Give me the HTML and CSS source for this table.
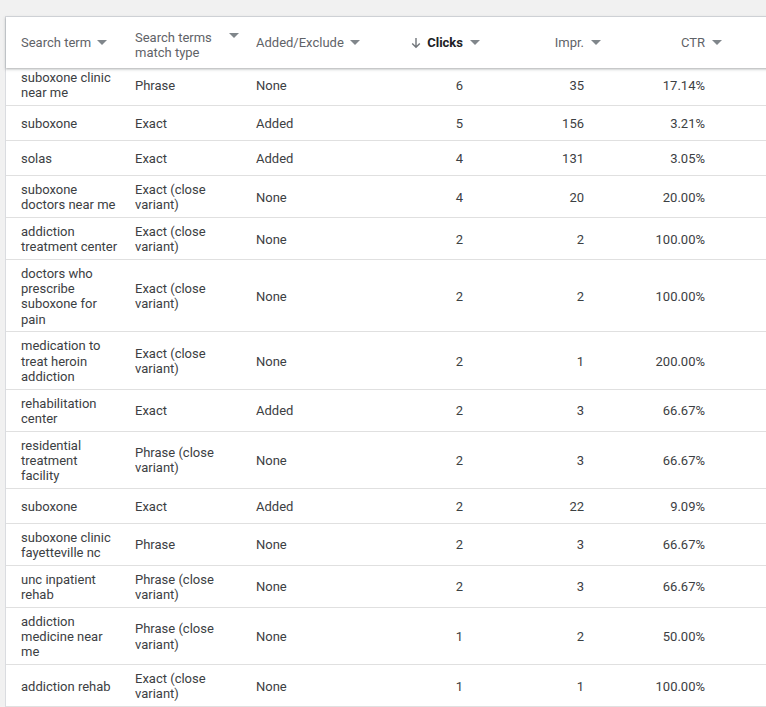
FILE: index.html
```html
<!DOCTYPE html>
<html lang="en">
<head>
<meta charset="utf-8">
<title>Search terms</title>
<link rel="stylesheet" href="styles.css">
</head>
<body>
<div class="page">
  <div class="card">
    <div class="thead">
      <div class="row head">
        <div class="th"><span class="label">Search term</span><span class="dd"></span></div>
        <div class="th top"><span class="label wrap">Search terms match type</span><span class="dd"></span></div>
        <div class="th"><span class="label clip">Added/Excluded</span><span class="dd"></span></div>
        <div class="th num sorted"><span class="arrow">
          <svg width="10" height="12" viewBox="0 0 10 12"><path d="M5 1v9M1.2 6.4L5 10.2l3.8-3.8" fill="none" stroke="#70757a" stroke-width="1.4"/></svg></span><span class="label">Clicks</span><span class="dd"></span></div>
        <div class="th num"><span class="label">Impr.</span><span class="dd"></span></div>
        <div class="th num"><span class="label">CTR</span><span class="dd"></span></div>
        <div class="th"></div>
      </div>
    </div>
    <div class="tbody">
      <div class="row"><div class="td">suboxone clinic near me</div><div class="td">Phrase</div><div class="td">None</div><div class="td num">6</div><div class="td num">35</div><div class="td num">17.14%</div><div class="td"></div></div>
      <div class="row"><div class="td">suboxone</div><div class="td">Exact</div><div class="td">Added</div><div class="td num">5</div><div class="td num">156</div><div class="td num">3.21%</div><div class="td"></div></div>
      <div class="row"><div class="td">solas</div><div class="td">Exact</div><div class="td">Added</div><div class="td num">4</div><div class="td num">131</div><div class="td num">3.05%</div><div class="td"></div></div>
      <div class="row"><div class="td">suboxone doctors near me</div><div class="td">Exact (close variant)</div><div class="td">None</div><div class="td num">4</div><div class="td num">20</div><div class="td num">20.00%</div><div class="td"></div></div>
      <div class="row"><div class="td">addiction treatment center</div><div class="td">Exact (close variant)</div><div class="td">None</div><div class="td num">2</div><div class="td num">2</div><div class="td num">100.00%</div><div class="td"></div></div>
      <div class="row"><div class="td">doctors who prescribe suboxone for pain</div><div class="td">Exact (close variant)</div><div class="td">None</div><div class="td num">2</div><div class="td num">2</div><div class="td num">100.00%</div><div class="td"></div></div>
      <div class="row"><div class="td">medication to treat heroin addiction</div><div class="td">Exact (close variant)</div><div class="td">None</div><div class="td num">2</div><div class="td num">1</div><div class="td num">200.00%</div><div class="td"></div></div>
      <div class="row"><div class="td">rehabilitation center</div><div class="td">Exact</div><div class="td">Added</div><div class="td num">2</div><div class="td num">3</div><div class="td num">66.67%</div><div class="td"></div></div>
      <div class="row"><div class="td">residential treatment facility</div><div class="td">Phrase (close variant)</div><div class="td">None</div><div class="td num">2</div><div class="td num">3</div><div class="td num">66.67%</div><div class="td"></div></div>
      <div class="row"><div class="td">suboxone</div><div class="td">Exact</div><div class="td">Added</div><div class="td num">2</div><div class="td num">22</div><div class="td num">9.09%</div><div class="td"></div></div>
      <div class="row"><div class="td">suboxone clinic fayetteville nc</div><div class="td">Phrase</div><div class="td">None</div><div class="td num">2</div><div class="td num">3</div><div class="td num">66.67%</div><div class="td"></div></div>
      <div class="row"><div class="td">unc inpatient rehab</div><div class="td">Phrase (close variant)</div><div class="td">None</div><div class="td num">2</div><div class="td num">3</div><div class="td num">66.67%</div><div class="td"></div></div>
      <div class="row"><div class="td">addiction medicine near me</div><div class="td">Phrase (close variant)</div><div class="td">None</div><div class="td num">1</div><div class="td num">2</div><div class="td num">50.00%</div><div class="td"></div></div>
      <div class="row"><div class="td">addiction rehab</div><div class="td">Exact (close variant)</div><div class="td">None</div><div class="td num">1</div><div class="td num">1</div><div class="td num">100.00%</div><div class="td"></div></div>
    </div>
  </div>
</div>
</body>
</html>
```

FILE: styles.css
```css
html, body {
  margin: 0;
  padding: 0;
  background: #f1f1f1;
  overflow: hidden;
  height: 707px;
}
body {
  font-family: Roboto, "Noto Sans", Arial, sans-serif;
  font-size: 13px;
  line-height: 15.2px;
  color: #3c4043;
}
.page {
  padding: 16px 0 0 5px;
}
.card {
  width: 900px;
  background: #fff;
  border: 1px solid #dadce0;
  border-right: none;
}
.row {
  display: grid;
  grid-template-columns: 123px 121px 122px 118px 121px 121px 1fr;
}
.thead {
  position: relative;
  z-index: 1;
  background: #fff;
  box-shadow: 0 1px 2px rgba(60, 64, 67, 0.3), 0 1px 3px 1px rgba(60, 64, 67, 0.12);
}
.head {
  height: 51px;
}
.th {
  display: flex;
  align-items: center;
  color: #5f6368;
  padding-left: 6px;
}
.th:first-child {
  padding-left: 15px;
}
.th.top {
  align-items: flex-start;
  padding-top: 13px;
}
.th .label.wrap {
  width: 90px;
}
.th.top .dd {
  margin-left: 4px;
  margin-top: 3px;
}
.th .label.clip {
  display: block;
  width: 88px;
  white-space: nowrap;
  overflow: hidden;
}
.dd {
  width: 0;
  height: 0;
  border-left: 5px solid transparent;
  border-right: 5px solid transparent;
  border-top: 5px solid #80868b;
  margin-left: 6px;
  flex: none;
}
.th.num {
  justify-content: flex-end;
  padding-right: 10px;
}
.th.num .dd {
  margin-left: 7px;
}
.th.sorted {
  color: #202124;
  font-weight: 700;
}
.arrow {
  display: flex;
  margin-right: 6px;
}
.tbody {
  margin-top: -4px;
}
.tbody .row {
  border-bottom: 1px solid #e0e0e0;
  min-height: 34px;
}
.td {
  display: flex;
  align-items: center;
  padding: 6px 8px 4.6px 6px;
}
.td:first-child {
  padding-left: 15px;
  padding-right: 11px;
}
.td.num {
  justify-content: flex-end;
  padding-right: 27px;
}
```
